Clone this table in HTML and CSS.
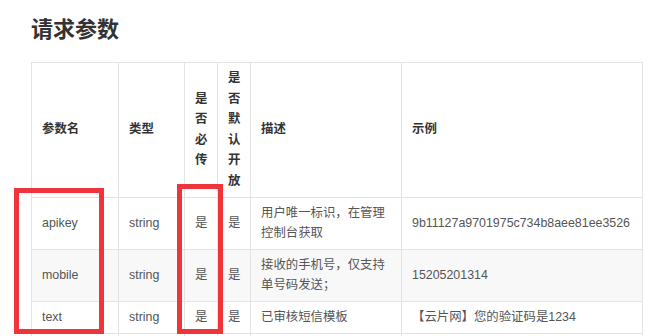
FILE: index.html
```html
<!DOCTYPE html>
<html lang="zh">
<head>
<meta charset="utf-8">
<link rel="stylesheet" href="styles.css">
</head>
<body>
<div class="page">
  <h2 class="title">请求参数</h2>
  <div class="table-wrap">
    <table class="params">
      <colgroup>
        <col class="c-name"><col class="c-type"><col class="c-req"><col class="c-def"><col class="c-desc"><col class="c-ex">
      </colgroup>
      <thead>
        <tr>
          <th>参数名</th>
          <th>类型</th>
          <th>是否必传</th>
          <th>是否默认开放</th>
          <th>描述</th>
          <th>示例</th>
        </tr>
      </thead>
      <tbody>
        <tr>
          <td>apikey</td>
          <td>string</td>
          <td>是</td>
          <td>是</td>
          <td>用户唯一标识，在管理控制台获取</td>
          <td>9b11127a9701975c734b8aee81ee3526</td>
        </tr>
        <tr class="alt">
          <td>mobile</td>
          <td>string</td>
          <td>是</td>
          <td>是</td>
          <td>接收的手机号，仅支持单号码发送；</td>
          <td>15205201314</td>
        </tr>
        <tr>
          <td>text</td>
          <td>string</td>
          <td>是</td>
          <td>是</td>
          <td>已审核短信模板</td>
          <td>【云片网】您的验证码是1234</td>
        </tr>
        <tr>
          <td>&nbsp;</td><td></td><td></td><td></td><td></td><td></td>
        </tr>
      </tbody>
    </table>
    <div class="mark mark-name"></div>
    <div class="mark mark-req"></div>
  </div>
</div>
</body>
</html>
```

FILE: styles.css
```css
html, body {
  margin: 0;
  padding: 0;
  background: #fff;
}
body {
  font-family: "Liberation Sans", "Noto Sans CJK SC", sans-serif;
  color: #333;
  overflow: hidden;
  height: 336px;
}
.page {
  padding: 12px 0 0 31px;
}
.title {
  margin: 0;
  font-size: 22px;
  line-height: 30px;
  font-weight: bold;
  color: #333;
  font-family: "Noto Sans CJK SC", sans-serif;
}
.table-wrap {
  position: relative;
  margin-top: 20px;
}
.params {
  border-collapse: collapse;
  table-layout: fixed;
  width: 611px;
  font-size: 12.4px;
  line-height: 20.6px;
}
.c-name { width: 87px; }
.c-type { width: 66px; }
.c-req { width: 33px; }
.c-def { width: 33px; }
.c-desc { width: 151px; }
.c-ex { width: 241px; }
.params th,
.params td {
  border: 1px solid #e3e3e3;
  padding: 5px 10px;
  text-align: left;
  vertical-align: middle;
  word-break: break-all;
}
.params th {
  font-weight: bold;
  color: #333;
}
.params td {
  color: #555;
}
.params tr.alt td {
  background: #f8f8f8;
}
.mark {
  position: absolute;
  border: 5px solid #f0353a;
  box-sizing: border-box;
}
.mark-name {
  left: -17px;
  top: 126px;
  width: 90px;
  height: 146px;
}
.mark-req {
  left: 146px;
  top: 122px;
  width: 46px;
  height: 150px;
}
```
